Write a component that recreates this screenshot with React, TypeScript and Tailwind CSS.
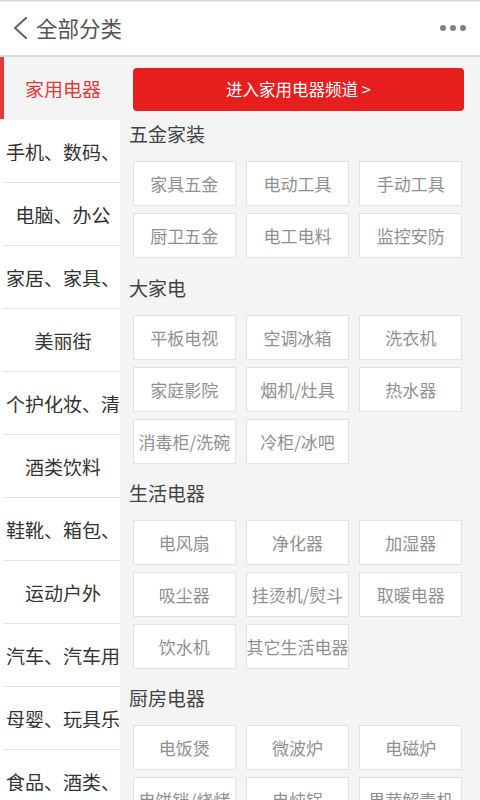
import React from "react";

const sideItems = [
  "家用电器",
  "手机、数码、通讯",
  "电脑、办公",
  "家居、家具、家装",
  "美丽街",
  "个护化妆、清洁",
  "酒类饮料",
  "鞋靴、箱包、钟表",
  "运动户外",
  "汽车、汽车用品",
  "母婴、玩具乐器",
  "食品、酒类、生鲜",
];

const sections: { title: string; items: string[]; mt: string }[] = [
  { title: "五金家装", mt: "", items: ["家具五金", "电动工具", "手动工具", "厨卫五金", "电工电料", "监控安防"] },
  { title: "大家电", mt: "mt-[7px]", items: ["平板电视", "空调冰箱", "洗衣机", "家庭影院", "烟机/灶具", "热水器", "消毒柜/洗碗", "冷柜/冰吧"] },
  { title: "生活电器", mt: "mt-[6px]", items: ["电风扇", "净化器", "加湿器", "吸尘器", "挂烫机/熨斗", "取暖电器", "饮水机", "其它生活电器"] },
  { title: "厨房电器", mt: "mt-[6px]", items: ["电饭煲", "微波炉", "电磁炉", "电饼铛/烧烤", "电炖锅", "果蔬解毒机"] },
];

export default function App() {
  return (
    <div
      className="w-[480px] h-[800px] overflow-hidden flex flex-col bg-[#f4f4f4]"
      style={{ fontFamily: '"Noto Sans CJK SC", "Noto Sans", sans-serif' }}
    >
      {/* header */}
      <div className="shrink-0 bg-white border-b-2 border-[#dadada]">
        <div className="h-[2px] bg-gradient-to-b from-[#c8c8c8] to-white" />
        <div className="h-[53px] flex items-center">
          <svg width="16" height="24" viewBox="0 0 16 24" className="ml-[12px] mb-[2px]">
            <path d="M14 2 L3 12 L14 22" fill="none" stroke="#666" strokeWidth="2.2" strokeLinecap="round" strokeLinejoin="round" />
          </svg>
          <span className="ml-[8px] text-[21.5px] leading-none text-[#555] mb-[2px]">全部分类</span>
          <div className="ml-auto mr-[14px] flex gap-[4px] mb-[2px]">
            <span className="w-[6px] h-[6px] rounded-full bg-[#808080]" />
            <span className="w-[6px] h-[6px] rounded-full bg-[#808080]" />
            <span className="w-[6px] h-[6px] rounded-full bg-[#808080]" />
          </div>
        </div>
      </div>

      <div className="flex flex-1 min-h-0">
        {/* sidebar */}
        <div className="w-[120px] shrink-0 bg-white flex flex-col">
          {sideItems.map((t, i) => {
            const active = i === 0;
            return (
              <div key={t} className={active ? "bg-[#f4f4f4] relative" : ""}>
                {active && <div className="absolute left-0 top-0 w-[4px] h-[62px] bg-[#e23a3a]" />}
                <div
                  className={
                    "h-[62px] flex items-center justify-start overflow-hidden whitespace-nowrap pl-[6px] text-[19px] leading-none " +
                    (active ? "text-[#e23a3a]" : "text-[#333]")
                  }
                >
                  <span className="block w-full text-center overflow-hidden">{t}</span>
                </div>
                <div className={active ? "h-px" : "h-px ml-[3px] bg-[#e4e4e4]"} />
              </div>
            );
          })}
        </div>

        {/* content */}
        <div className="flex-1 min-w-0 bg-[#f4f4f4]">
          <div className="mt-[11px] ml-[13px] mr-[16px] h-[43px] rounded-[4px] bg-[#e61e1e] flex items-center justify-center text-white text-[16.5px] leading-none">
            进入家用电器频道 &gt;
          </div>
          {sections.map((s) => (
            <div key={s.title} className={s.mt}>
              <div className="h-[50px] flex items-center pb-[6px] pl-[9px] text-[19px] leading-none text-[#444]">
                {s.title}
              </div>
              <div className="grid grid-cols-3 gap-x-[10.5px] gap-y-[7px] pl-[13px] pr-[18px]">
                {s.items.map((it) => (
                  <div
                    key={it}
                    className="h-[45px] bg-white border border-[#e2e2e2] flex items-center justify-center whitespace-nowrap text-[17px] leading-none text-[#909090]"
                  >
                    {it}
                  </div>
                ))}
              </div>
            </div>
          ))}
        </div>
      </div>
    </div>
  );
}
